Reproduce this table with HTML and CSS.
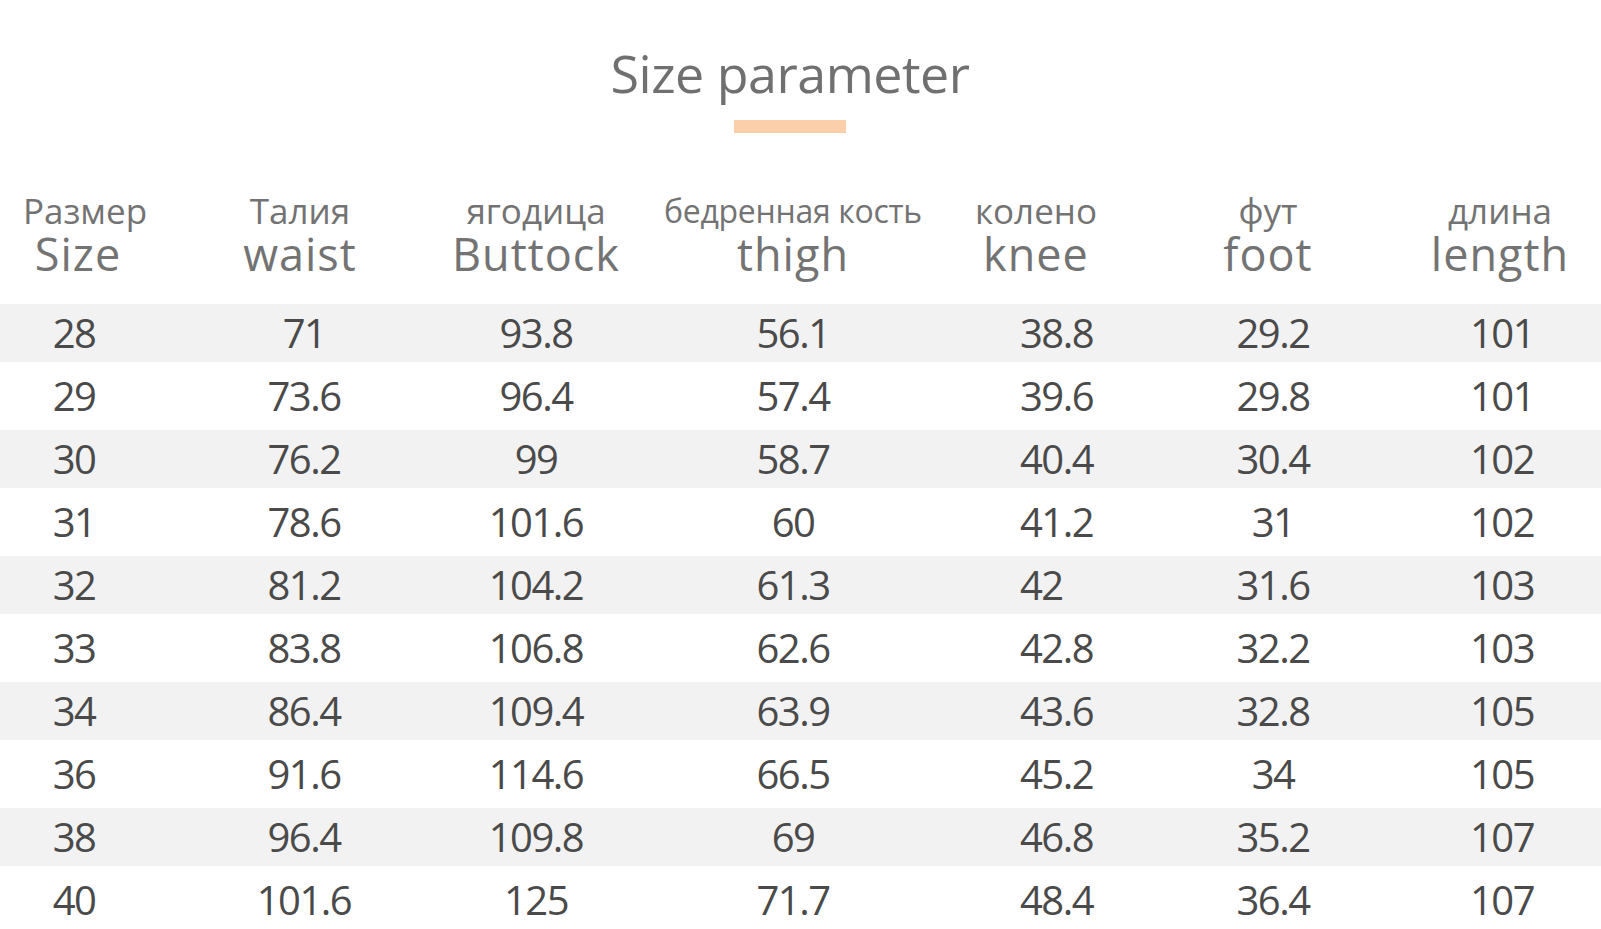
FILE: index.html
```html
<!DOCTYPE html>
<html lang="ru">
<head>
<meta charset="utf-8">
<title>Size parameter</title>
<link rel="stylesheet" href="styles.css">
</head>
<body>
<div class="page">
  <header class="title-block">
    <h1 class="title">Size parameter</h1>
    <div class="title-bar"></div>
  </header>
  <div class="table">
    <div class="row head">
      <div class="cell c1"><span class="ru">Размер</span><span class="en">Size</span></div>
      <div class="cell c2"><span class="ru">Талия</span><span class="en">waist</span></div>
      <div class="cell c3"><span class="ru">ягодица</span><span class="en">Buttock</span></div>
      <div class="cell c4"><span class="ru small">бедренная кость</span><span class="en">thigh</span></div>
      <div class="cell c5"><span class="ru">колено</span><span class="en">knee</span></div>
      <div class="cell c6"><span class="ru">фут</span><span class="en">foot</span></div>
      <div class="cell c7"><span class="ru">длина</span><span class="en">length</span></div>
    </div>
    <div class="row data shade"><div class="cell c1">28</div><div class="cell c2">71</div><div class="cell c3">93.8</div><div class="cell c4">56.1</div><div class="cell c5">38.8</div><div class="cell c6">29.2</div><div class="cell c7">101</div></div>
    <div class="row data"><div class="cell c1">29</div><div class="cell c2">73.6</div><div class="cell c3">96.4</div><div class="cell c4">57.4</div><div class="cell c5">39.6</div><div class="cell c6">29.8</div><div class="cell c7">101</div></div>
    <div class="row data shade"><div class="cell c1">30</div><div class="cell c2">76.2</div><div class="cell c3">99</div><div class="cell c4">58.7</div><div class="cell c5">40.4</div><div class="cell c6">30.4</div><div class="cell c7">102</div></div>
    <div class="row data"><div class="cell c1">31</div><div class="cell c2">78.6</div><div class="cell c3">101.6</div><div class="cell c4">60</div><div class="cell c5">41.2</div><div class="cell c6">31</div><div class="cell c7">102</div></div>
    <div class="row data shade"><div class="cell c1">32</div><div class="cell c2">81.2</div><div class="cell c3">104.2</div><div class="cell c4">61.3</div><div class="cell c5">42</div><div class="cell c6">31.6</div><div class="cell c7">103</div></div>
    <div class="row data"><div class="cell c1">33</div><div class="cell c2">83.8</div><div class="cell c3">106.8</div><div class="cell c4">62.6</div><div class="cell c5">42.8</div><div class="cell c6">32.2</div><div class="cell c7">103</div></div>
    <div class="row data shade"><div class="cell c1">34</div><div class="cell c2">86.4</div><div class="cell c3">109.4</div><div class="cell c4">63.9</div><div class="cell c5">43.6</div><div class="cell c6">32.8</div><div class="cell c7">105</div></div>
    <div class="row data"><div class="cell c1">36</div><div class="cell c2">91.6</div><div class="cell c3">114.6</div><div class="cell c4">66.5</div><div class="cell c5">45.2</div><div class="cell c6">34</div><div class="cell c7">105</div></div>
    <div class="row data shade"><div class="cell c1">38</div><div class="cell c2">96.4</div><div class="cell c3">109.8</div><div class="cell c4">69</div><div class="cell c5">46.8</div><div class="cell c6">35.2</div><div class="cell c7">107</div></div>
    <div class="row data"><div class="cell c1">40</div><div class="cell c2">101.6</div><div class="cell c3">125</div><div class="cell c4">71.7</div><div class="cell c5">48.4</div><div class="cell c6">36.4</div><div class="cell c7">107</div></div>
  </div>
</div>
</body>
</html>
```
FILE: styles.css
```css
html, body {
  margin: 0;
  padding: 0;
  background: #ffffff;
}
body {
  font-family: "Open Sans", "Noto Sans", "DejaVu Sans", sans-serif;
  overflow: hidden;
}
.page {
  width: 1601px;
  height: 929px;
  overflow: hidden;
}
.title-block {
  display: flex;
  flex-direction: column;
  align-items: center;
  padding-top: 47px;
  padding-right: 21px;
}
.title {
  margin: 0;
  font-size: 52px;
  line-height: 52px;
  font-weight: 400;
  letter-spacing: -0.5px;
  color: #707070;
}
.title-bar {
  width: 112px;
  height: 13px;
  margin-top: 21px;
  background: #fbcfaa;
}
.table {
  margin-top: 45px;
  display: flex;
  flex-direction: column;
}
.row {
  display: grid;
  grid-template-columns: 156px 288px 184px 330px 156px 308px 156px;
  align-items: center;
}
.cell {
  text-align: center;
  white-space: nowrap;
}
.head {
  box-sizing: border-box;
  height: 126px;
  padding-top: 14px;
  align-items: start;
}
.head .cell {
  display: flex;
  flex-direction: column;
  align-items: center;
  color: #737373;
}
.ru {
  font-size: 35px;
  line-height: 38px;
}
.ru.small {
  font-size: 32px;
  letter-spacing: -0.3px;
}
.head .c1 .ru {
  padding-left: 14px;
}
.en {
  font-size: 45px;
  line-height: 48px;
  letter-spacing: 1px;
}
.data {
  height: 68px;
  font-size: 40px;
  line-height: 50px;
  letter-spacing: -1.5px;
  color: #4a4a4a;
}
.data.shade {
  height: 58px;
  background: #f2f2f2;
}
.data .c1 {
  padding-right: 8px;
}
.data .c2 {
  padding-left: 8px;
}
.data .c5 {
  text-align: left;
  padding-left: 62px;
}
.data .c6 {
  padding-left: 10px;
}
.data .c7 {
  padding-left: 4px;
}
```
